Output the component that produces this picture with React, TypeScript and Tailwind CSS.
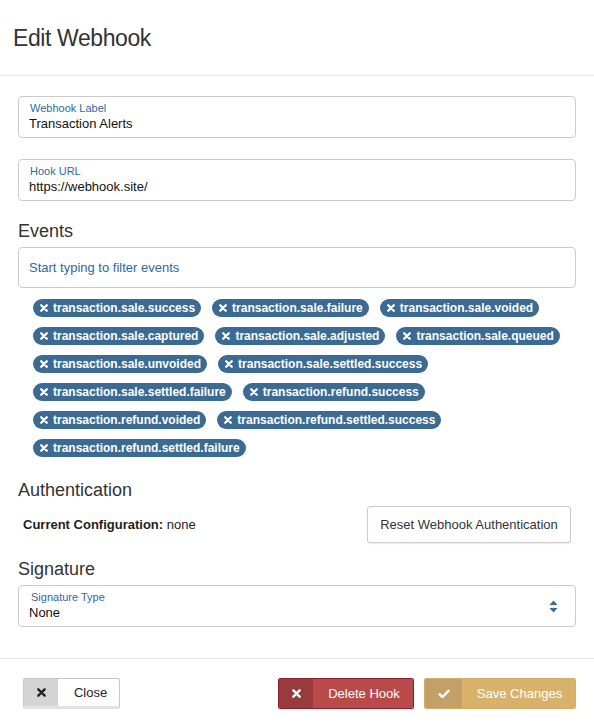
import React from 'react';

const EVENTS = [
  'transaction.sale.success',
  'transaction.sale.failure',
  'transaction.sale.voided',
  'transaction.sale.captured',
  'transaction.sale.adjusted',
  'transaction.sale.queued',
  'transaction.sale.unvoided',
  'transaction.sale.settled.success',
  'transaction.sale.settled.failure',
  'transaction.refund.success',
  'transaction.refund.voided',
  'transaction.refund.settled.success',
  'transaction.refund.settled.failure',
];

function XIcon({ size = 8, color = 'currentColor', stroke = 2.6 }: { size?: number; color?: string; stroke?: number }) {
  return (
    <svg width={size} height={size} viewBox="0 0 10 10" fill="none">
      <path d="M1.5 1.5L8.5 8.5M8.5 1.5L1.5 8.5" stroke={color} strokeWidth={stroke} strokeLinecap="round" />
    </svg>
  );
}

function FloatingField({ label, value }: { label: string; value: string }) {
  return (
    <div className="h-[42px] rounded-[4px] border border-[#cccccc] px-[10px] pt-[4px] flex flex-col">
      <span className="text-[11px] leading-[14px] text-[#33689a] pl-[1px]">{label}</span>
      <span className="text-[13px] leading-[18px] text-[#111]">{value}</span>
    </div>
  );
}

export default function App() {
  return (
    <div className="w-[594px] h-[728px] bg-white text-[#333] flex flex-col" style={{ fontFamily: '"Liberation Sans", Arial, sans-serif' }}>
      {/* Header */}
      <header className="h-[76px] border-b border-[#e5e5e5] flex items-center pl-[13px]">
        <h1 className="text-[23px] leading-[26px] text-[#333] tracking-[-0.4px]">Edit Webhook</h1>
      </header>

      {/* Body */}
      <div className="px-[18px] pt-[20px] flex flex-col">
        <FloatingField label="Webhook Label" value="Transaction Alerts" />
        <div className="mt-[21px]">
          <FloatingField label="Hook URL" value="https://webhook.site/" />
        </div>

        <h2 className="mt-[19px] h-[22px] text-[18px] leading-[22px] text-[#333]">Events</h2>
        <div className="mt-[5px] h-[41px] rounded-[4px] border border-[#cccccc] flex items-center px-[10px]">
          <span className="text-[13px] text-[#33689a]">Start typing to filter events</span>
        </div>

        <ul className="mt-[11px] pl-[15px] pr-[12px] flex flex-wrap gap-x-[11px] gap-y-[10px]">
          {EVENTS.map((e) => (
            <li key={e} className="h-[18px] rounded-full bg-[#3b6b93] text-white flex items-center gap-[5px] pl-[7px] pr-[6px]">
              <XIcon size={8} color="#fff" stroke={2.8} />
              <span className="text-[12px] leading-[18px] font-bold">{e}</span>
            </li>
          ))}
        </ul>

        <h2 className="mt-[22px] h-[22px] text-[18px] leading-[22px] text-[#333]">Authentication</h2>
        <div className="mt-[5px] flex items-center justify-between pl-[5px] pr-[5px]">
          <span className="text-[13px] text-[#222]">
            <b>Current Configuration:</b> none
          </span>
          <button className="h-[37px] w-[204px] rounded-[3px] border border-[#cccccc] bg-white text-[13px] text-[#333] shadow-[0_1px_1px_rgba(0,0,0,0.08)]">
            Reset Webhook Authentication
          </button>
        </div>

        <h2 className="mt-[15px] h-[22px] text-[18px] leading-[22px] text-[#333]">Signature</h2>
        <div className="mt-[5px] h-[42px] rounded-[4px] border border-[#cccccc] pl-[10px] pr-[17px] flex items-center">
          <div className="flex-1 flex flex-col">
            <span className="text-[11px] leading-[14px] text-[#33689a] pl-[2px]">Signature Type</span>
            <span className="text-[13px] leading-[18px] text-[#111]">None</span>
          </div>
          <svg width="9" height="13" viewBox="0 0 9 13">
            <path d="M4.5 0.5L8.5 5H0.5Z" fill="#3b6b93" />
            <path d="M4.5 12.5L8.5 8H0.5Z" fill="#3b6b93" />
          </svg>
        </div>
      </div>

      {/* Footer */}
      <footer className="mt-[31px] border-t border-[#e5e5e5] pt-[19px] pl-[23px] pr-[18px] flex items-start">
        <button className="h-[31px] w-[97px] flex rounded-[2px] border border-[#c8c8c8] border-b-[3px] border-b-[#e2e2e2] overflow-hidden">
          <span className="w-[34px] h-full bg-[#d4d4d4] flex items-center justify-center">
            <XIcon size={9} color="#222" stroke={2.6} />
          </span>
          <span className="flex-1 bg-white flex items-center justify-center pl-[4px] text-[13px] text-[#222]">Close</span>
        </button>

        <div className="ml-auto flex gap-[10px]">
          <button className="h-[31px] w-[136px] flex rounded-[2px] border border-[#8d1f2c] overflow-hidden">
            <span className="w-[34px] h-full bg-[#983b3c] flex items-center justify-center">
              <XIcon size={9} color="#fff" stroke={2.6} />
            </span>
            <span className="flex-1 bg-[#b94a4a] flex items-center justify-center pl-[2px] text-[13px] text-white">Delete Hook</span>
          </button>
          <button className="h-[31px] w-[152px] flex rounded-[2px] border border-[#cfae6c] overflow-hidden">
            <span className="w-[37px] h-full bg-[#c3a066] flex items-center justify-center">
              <svg width="12" height="10" viewBox="0 0 12 10" fill="none">
                <path d="M1.5 5.2L4.5 8L10.5 1.8" stroke="#fff" strokeWidth="2.4" strokeLinecap="round" strokeLinejoin="round" />
              </svg>
            </span>
            <span className="flex-1 bg-[#d8b26b] flex items-center justify-center pl-[2px] text-[13px] text-white">Save Changes</span>
          </button>
        </div>
      </footer>
    </div>
  );
}
